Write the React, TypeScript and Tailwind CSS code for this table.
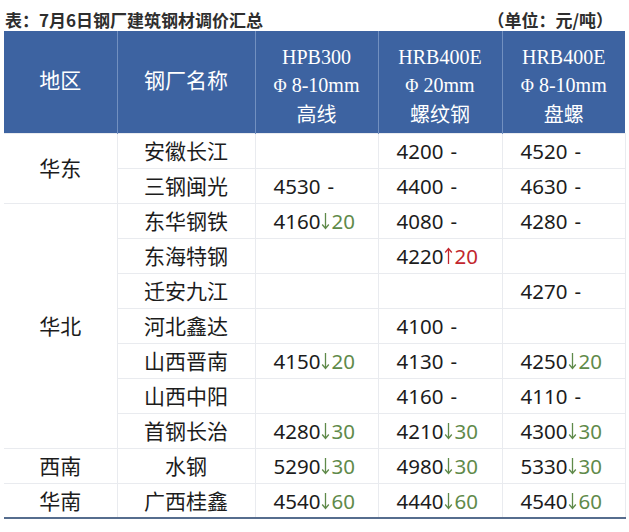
import React from "react";

type Price = { v: number; d?: number; up?: boolean } | null;

type Row = { region?: string; span?: number; mill: string; p: [Price, Price, Price] };

const rows: Row[] = [
  { region: "华东", span: 2, mill: "安徽长江", p: [null, { v: 4200 }, { v: 4520 }] },
  { mill: "三钢闽光", p: [{ v: 4530 }, { v: 4400 }, { v: 4630 }] },
  { region: "华北", span: 7, mill: "东华钢铁", p: [{ v: 4160, d: 20 }, { v: 4080 }, { v: 4280 }] },
  { mill: "东海特钢", p: [null, { v: 4220, d: 20, up: true }, null] },
  { mill: "迁安九江", p: [null, null, { v: 4270 }] },
  { mill: "河北鑫达", p: [null, { v: 4100 }, null] },
  { mill: "山西晋南", p: [{ v: 4150, d: 20 }, { v: 4130 }, { v: 4250, d: 20 }] },
  { mill: "山西中阳", p: [null, { v: 4160 }, { v: 4110 }] },
  { mill: "首钢长治", p: [{ v: 4280, d: 30 }, { v: 4210, d: 30 }, { v: 4300, d: 30 }] },
  { region: "西南", span: 1, mill: "水钢", p: [{ v: 5290, d: 30 }, { v: 4980, d: 30 }, { v: 5330, d: 30 }] },
  { region: "华南", span: 1, mill: "广西桂鑫", p: [{ v: 4540, d: 60 }, { v: 4440, d: 60 }, { v: 4540, d: 60 }] },
];

const cjk = "font-['Noto_Sans_CJK_SC',sans-serif]";
const num = "font-['Noto_Sans','Noto_Sans_CJK_SC',sans-serif]";
const serif = "font-['Liberation_Serif','Noto_Sans_CJK_SC',serif]";

function Arrow({ up }: { up?: boolean }) {
  return (
    <svg width="9" height="18" viewBox="0 0 9 18" className="mx-[1px] inline-block" style={{ transform: up ? "rotate(180deg)" : undefined }}>
      <path d="M4.5 1 V16.5 M1.2 12.5 L4.5 16.5 L7.8 12.5" fill="none" stroke="currentColor" strokeWidth="1.3" />
    </svg>
  );
}

function PriceCell({ p }: { p: Price }) {
  return (
    <td className="border-x border-[#e9ebef] pl-[18px] align-middle">
      {p && (
        <span className={`${num} flex items-center pt-[1px] text-[20.5px] leading-none text-[#1c1c1c]`}>
          {p.v}
          {p.d ? (
            <span className={`flex items-center ${p.up ? "text-[#c2262e]" : "text-[#5f8a4a]"}`}>
              <Arrow up={p.up} />
              {p.d}
            </span>
          ) : (
            <span className="ml-[7px]">-</span>
          )}
        </span>
      )}
    </td>
  );
}

function HeadCell({ lines }: { lines: React.ReactNode[] }) {
  return (
    <th className={`border-l border-[#7290c0] pt-[8px] font-normal text-white ${serif} text-[20px] leading-[28.5px]`}>
      {lines.map((l, i) => (
        <div key={i}>{l}</div>
      ))}
    </th>
  );
}

const phi = <span className="mr-[5px] text-[18px]">Φ</span>;

export default function App() {
  return (
    <div className="h-[532px] w-[629px] bg-white">
      <div className={`${cjk} flex h-[31px] items-end justify-between pb-[3px] pl-[5px] pr-[16px] text-[17px] leading-none text-[#2e2e2e]`}>
        <span className="font-bold">表：7月6日钢厂建筑钢材调价汇总</span>
        <span className="font-bold">（单位：元/吨）</span>
      </div>
      <table className="ml-[4px] w-[621px] table-fixed border-collapse">
        <colgroup>
          <col className="w-[113px]" />
          <col className="w-[138px]" />
          <col className="w-[123px]" />
          <col className="w-[124px]" />
          <col className="w-[123px]" />
        </colgroup>
        <thead>
          <tr className="h-[102px] bg-[#3d63a1]">
            <th className={`${serif} text-[21px] font-normal text-white`}>地区</th>
            <th className={`${serif} border-l border-[#7290c0] text-[21px] font-normal text-white`}>钢厂名称</th>
            <HeadCell lines={["HPB300", <>{phi}8-10mm</>, "高线"]} />
            <HeadCell lines={["HRB400E", <>{phi}20mm</>, "螺纹钢"]} />
            <HeadCell lines={["HRB400E", <>{phi}8-10mm</>, "盘螺"]} />
          </tr>
        </thead>
        <tbody className="border-b-2 border-[#566d8e]">
          {rows.map((r, i) => (
            <tr key={i} className="h-[35px] border-t border-[#e9ebef]">
              {r.region && (
                <td rowSpan={r.span} className={`${cjk} border-t border-[#e9ebef] text-center text-[21px] text-[#1c1c1c]`}>
                  {r.region}
                </td>
              )}
              <td className={`${cjk} border-x border-[#e9ebef] text-center text-[21px] text-[#1c1c1c]`}>{r.mill}</td>
              {r.p.map((p, j) => (
                <PriceCell key={j} p={p} />
              ))}
            </tr>
          ))}
        </tbody>
      </table>
    </div>
  );
}
